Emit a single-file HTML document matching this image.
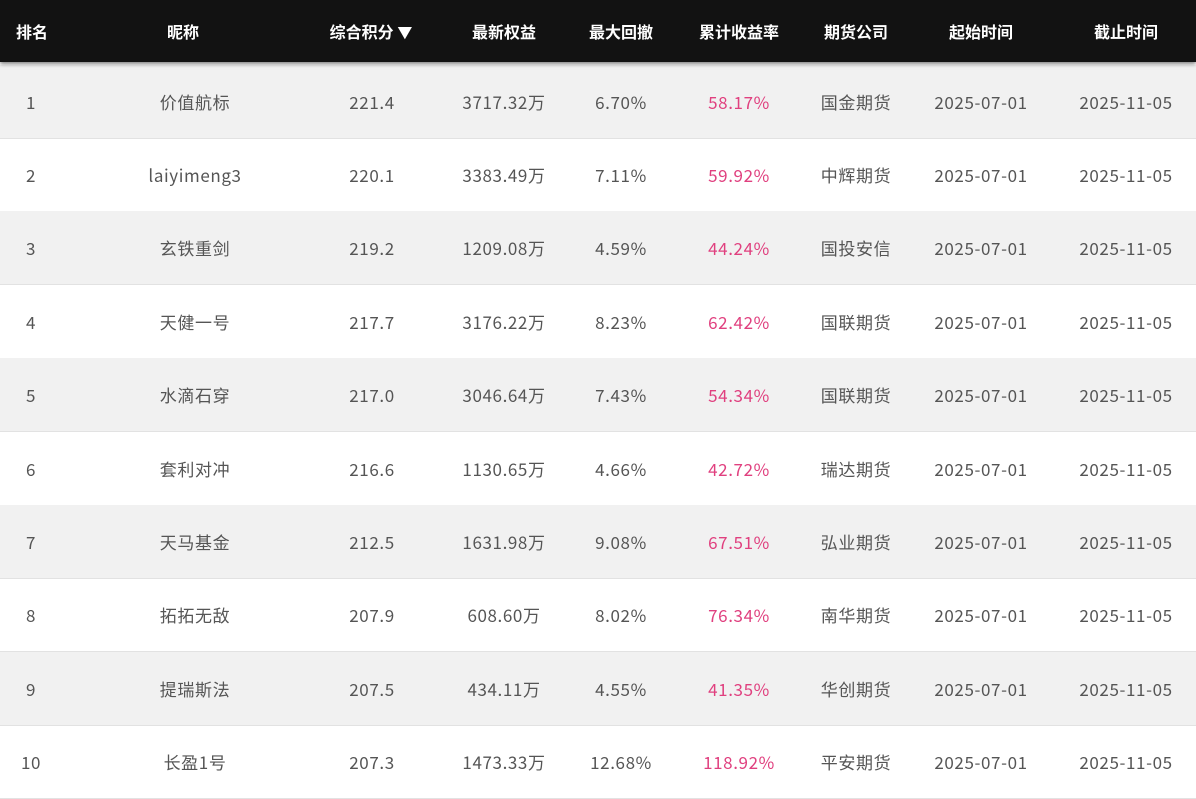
<!DOCTYPE html>
<html><head><meta charset="utf-8"><style>
body{margin:0;width:1196px;height:796px;overflow:hidden;background:#fff;font-family:"Noto Sans CJK SC",sans-serif;position:relative}
.hd{position:absolute;left:0;top:0;width:1196px;height:62px;background:#121212;box-shadow:0 2px 4px rgba(0,0,0,.5);z-index:2}
.hd span{position:absolute;top:0;line-height:62px;color:#fff;font-weight:bold;font-size:16px;transform:translateX(-50%);white-space:nowrap}
.row{position:absolute;left:0;width:1196px;height:73px;border-bottom:1px solid #e2e2e2}
.row.g{background:#f1f1f1}
.row span{position:absolute;top:0;line-height:73px;color:#555;font-size:17px;letter-spacing:0.6px;transform:translateX(-50%);white-space:nowrap}
.row span.p{color:#e0407f}
</style></head><body>
<div class="hd">
<span style="left:32px">排名</span><span style="left:183px">昵称</span><span style="left:371px">综合积分 <span style="position:static;transform:none;font-size:15px;line-height:inherit">▼</span></span><span style="left:504px">最新权益</span><span style="left:621px">最大回撤</span><span style="left:739px">累计收益率</span><span style="left:856px">期货公司</span><span style="left:981px">起始时间</span><span style="left:1126px">截止时间</span>
</div>
<div id="rows"></div>
<script>
var d=[["1","价值航标","221.4","3717.32万","6.70%","58.17%","国金期货"],
["2","laiyimeng3","220.1","3383.49万","7.11%","59.92%","中辉期货"],
["3","玄铁重剑","219.2","1209.08万","4.59%","44.24%","国投安信"],
["4","天健一号","217.7","3176.22万","8.23%","62.42%","国联期货"],
["5","水滴石穿","217.0","3046.64万","7.43%","54.34%","国联期货"],
["6","套利对冲","216.6","1130.65万","4.66%","42.72%","瑞达期货"],
["7","天马基金","212.5","1631.98万","9.08%","67.51%","弘业期货"],
["8","拓拓无敌","207.9","608.60万","8.02%","76.34%","南华期货"],
["9","提瑞斯法","207.5","434.11万","4.55%","41.35%","华创期货"],
["10","长盈1号","207.3","1473.33万","12.68%","118.92%","平安期货"]];
var x=[31,195,372,504,621,739,856,981,1126],h="";
d.forEach(function(r,i){r.push("2025-07-01","2025-11-05");
h+='<div class="row'+(i%2==0?' g':'')+'" style="top:'+(64.5+i*73.4)+'px">';
r.forEach(function(c,j){h+='<span'+(j==5?' class="p"':'')+' style="left:'+x[j]+'px">'+c+'</span>'});h+='</div>'});
document.getElementById('rows').innerHTML=h;
</script>
</body></html>
